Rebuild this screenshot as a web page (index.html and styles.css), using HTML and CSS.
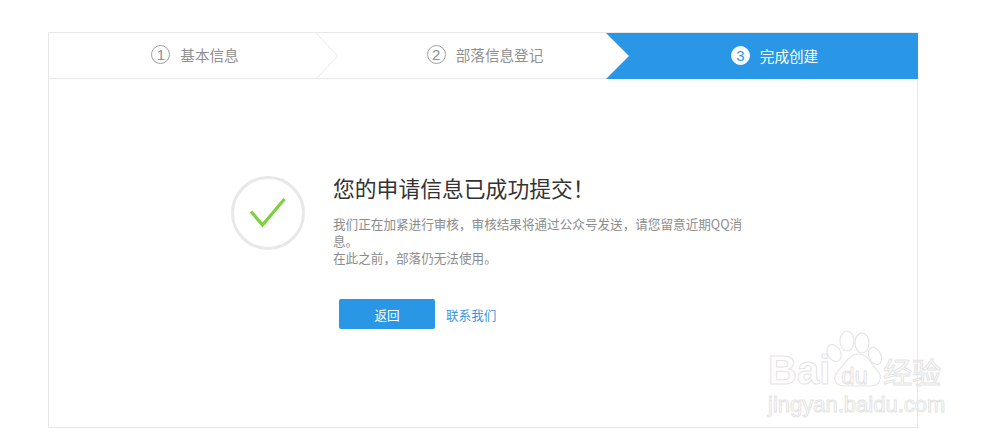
FILE: index.html
```html
<!DOCTYPE html>
<html lang="zh-CN">
<head>
<meta charset="utf-8">
<title>完成创建</title>
<link rel="stylesheet" href="styles.css">
</head>
<body>
<main class="card">
  <nav class="steps">
    <div class="step">
      <span class="num">1</span><span>基本信息</span>
      <svg class="chevron" width="24" height="46" viewBox="0 0 24 46"><path d="M1 0 L22.5 23 L1 46" fill="none" stroke="#e8e8e8"/></svg>
    </div>
    <div class="step">
      <span class="num">2</span><span>部落信息登记</span>
    </div>
    <div class="step step-active">
      <span class="num">3</span><span>完成创建</span>
    </div>
  </nav>
  <section class="result">
    <div class="tick">
      <svg width="38" height="32" viewBox="0 0 38 32"><path d="M2 14.5 L13.5 28 L35.5 2" fill="none" stroke="#7ed03c" stroke-width="3.2"/></svg>
    </div>
    <div class="message">
      <h1 class="title">您的申请信息已成功提交！</h1>
      <p class="desc">我们正在加紧进行审核，审核结果将通过公众号发送，请您留意近期QQ消息。<br>在此之前，部落仍无法使用。</p>
      <div class="actions">
        <a class="btn">返回</a>
        <a class="link">联系我们</a>
      </div>
    </div>
  </section>
</main>
<div class="watermark">
  <svg class="paw" width="64" height="64" viewBox="0 0 64 64">
    <g fill="#fff" fill-opacity=".5" stroke="#e6e6e6" stroke-width="1.2">
      <ellipse cx="9" cy="25" rx="6.5" ry="9" transform="rotate(-30 9 25)"/>
      <ellipse cx="22" cy="13" rx="7" ry="10"/>
      <ellipse cx="37" cy="15" rx="7" ry="10"/>
      <ellipse cx="50" cy="28" rx="6" ry="9" transform="rotate(-25 50 28)"/>
      <path d="M33 26 C43 26 46 36 52 42 C59 50 54 58 46 58 L20 58 C10 58 6 50 14 42 C20 36 24 26 33 26 Z"/>
    </g>
  </svg>
  <div class="wm-top"><span class="wm-bai">Bai</span><span class="wm-du">du</span><span class="wm-cn">经验</span></div>
  <div class="wm-url">jingyan.baidu.com</div>
</div>
</body>
</html>
```
FILE: styles.css
```css
* { box-sizing: border-box; }
html, body { margin: 0; height: 438px; overflow: hidden; background: #fff; }
body {
  position: relative;
  padding: 32px 0 0 48px;
  font-family: "Noto Sans CJK SC", "Liberation Sans", sans-serif;
}
.card {
  width: 870px;
  height: 396px;
  border: 1px solid #e8e8e8;
}
.steps {
  display: flex;
  height: 46px;
  border-bottom: 1px solid #e8e8e8;
}
.step {
  position: relative;
  flex: 0 0 290px;
  display: flex;
  align-items: center;
  justify-content: center;
  gap: 10px;
  padding: 0 0 2px 2px;
  font-size: 14.6px;
  color: #8f8f8f;
}
.chevron { position: absolute; right: 0; top: 0; }
.num {
  width: 19px;
  height: 19px;
  border: 1px solid #a0a0a0;
  border-radius: 50%;
  display: flex;
  align-items: center;
  justify-content: center;
  font-size: 15px;
  font-family: "Liberation Sans", sans-serif;
}
.step-active {
  flex: 0 0 312px;
  margin-left: -23px;
  padding-left: 25px;
  height: 46px;
  color: #fff;
  background: #2a97e6;
  clip-path: polygon(0 0, 100% 0, 100% 100%, 0 100%, 23px 50%);
}
.step-active .num {
  background: #fff;
  border-color: #fff;
  color: #2a97e6;
}
.result {
  display: flex;
  gap: 28px;
  padding: 97px 0 0 182px;
}
.tick {
  flex: none;
  width: 74px;
  height: 74px;
  border: 3px solid #e8e8e8;
  border-radius: 50%;
  display: flex;
  align-items: center;
  justify-content: center;
}
.message { width: 412px; }
.title {
  margin: -3px 0 0;
  font-size: 21.8px;
  line-height: 30px;
  font-weight: 400;
  color: #333;
}
.desc {
  margin: 12px 0 0;
  font-size: 12.6px;
  line-height: 17px;
  color: #8c8c8c;
}
.actions {
  display: flex;
  align-items: center;
  gap: 11px;
  margin: 33px 0 0 6px;
}
.btn {
  width: 96px;
  height: 30px;
  border-radius: 2px;
  background: #2a97e6;
  color: #fff;
  font-size: 12.6px;
  display: flex;
  align-items: center;
  justify-content: center;
}
.link { font-size: 12.6px; color: #3a97e5; }
.watermark {
  position: absolute;
  left: 768px;
  top: 330px;
  width: 190px;
  height: 100px;
  color: rgba(255, 255, 255, .5);
  -webkit-text-stroke: 1px #e4e4e4;
}
.paw { position: absolute; left: 57px; top: -2px; }
.wm-top {
  position: absolute;
  left: 0;
  top: 18px;
  display: flex;
  align-items: baseline;
  font-family: "Liberation Sans", sans-serif;
  white-space: nowrap;
}
.wm-bai { font-size: 40px; font-weight: 700; }
.wm-du { font-size: 24px; margin-left: 11px; }
.wm-cn { font-size: 29px; margin-left: 15px; font-family: "Noto Sans CJK SC", sans-serif; }
.wm-url {
  position: absolute;
  left: 0;
  top: 62px;
  font-family: "Liberation Sans", sans-serif;
  font-size: 22px;
  white-space: nowrap;
}
```
